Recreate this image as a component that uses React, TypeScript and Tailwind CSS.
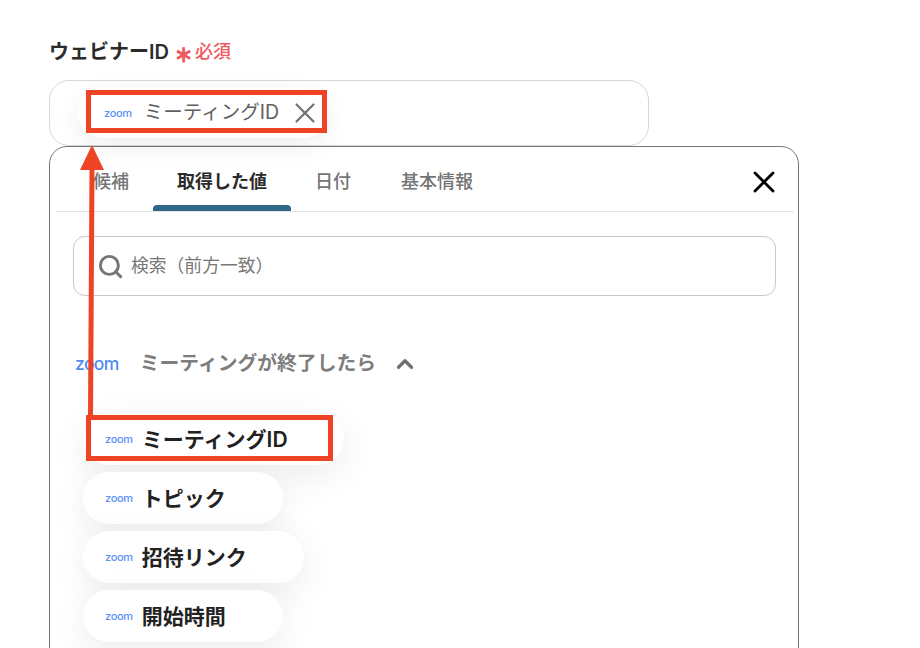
import { ChevronUp, Search, X } from "lucide-react"

const fontStack = "font-['Inter','Noto_Sans_CJK_JP',sans-serif]"

function ZoomLogo({ size }: { size: "sm" | "lg" }) {
  // Zoom wordmark
  return (
    <span
      className={
        size === "sm"
          ? "font-['Inter',sans-serif] text-[11px] leading-none font-medium tracking-[-0.3px] text-[#5b93f5]"
          : "font-['Inter',sans-serif] text-[17.5px] leading-none font-medium tracking-[-0.6px] text-[#4f8cf0]"
      }
    >
      zoom
    </span>
  )
}

function ValueChip({ label, width }: { label: string; width: string }) {
  return (
    <div
      className={`flex h-[52px] items-center rounded-full bg-white pl-[22px] shadow-[0_10px_36px_rgba(0,0,0,0.08)] ${width}`}
    >
      <ZoomLogo size="sm" />
      <span className="ml-[9px] text-[21px] leading-none font-semibold text-[#222222]">
        {label}
      </span>
    </div>
  )
}

function Tab({ label }: { label: string }) {
  return (
    <div className="flex h-[64px] items-center px-[24px] pt-[5px] text-[18px] font-medium text-[#757575]">
      {label}
    </div>
  )
}

export default function App() {
  return (
    <div
      className={`relative h-[648px] w-[920px] overflow-hidden bg-white pt-[40px] pl-[49px] ${fontStack}`}
    >
      {/* Label */}
      <div className="flex h-[24px] items-center">
        <span className="text-[20px] leading-none font-semibold text-[#2b2b2b]">
          ウェビナーID
        </span>
        <span className="mt-[5px] ml-[5px] text-[23px] leading-none font-bold text-[#ee5a60]">
          ∗
        </span>
        <span className="ml-[2px] text-[18px] leading-none font-medium text-[#ee5a60]">
          必須
        </span>
      </div>

      {/* Input with selected value */}
      <div className="mt-[16px] flex h-[66px] w-[600px] items-center rounded-[20px] border border-[#d4d8dc] pl-[28px]">
        <div className="flex h-[50px] w-[250px] items-center rounded-full bg-white pl-[26px] shadow-[0_8px_28px_rgba(0,0,0,0.07)]">
          <ZoomLogo size="sm" />
          <span className="ml-[12px] text-[19.5px] leading-none text-[#5f5f5f]">
            ミーティングID
          </span>
          <X className="ml-[9px] h-[34px] w-[34px] text-[#707070]" strokeWidth={1.5} />
        </div>
      </div>

      {/* Picker panel */}
      <div className="h-[520px] w-[750px] rounded-t-[18px] border border-[#777777] pr-[4px] pl-[6px]">
        <div className="relative flex h-[65px] items-end border-b border-[#e4e4e4] pl-[13px]">
          <Tab label="候補" />
          <div className="relative flex h-[64px] items-center px-[24px] pt-[5px] text-[18px] font-bold text-[#2b2b2b]">
            取得した値
            <div className="absolute right-0 bottom-0 left-0 h-[6px] rounded-t-[4px] bg-[#2e6a85]" />
          </div>
          <Tab label="日付" />
          <div className="ml-[2px]">
            <Tab label="基本情報" />
          </div>
          <X
            className="absolute top-[17px] right-[12px] h-[36px] w-[36px] text-black"
            strokeWidth={1.9}
          />
        </div>

        {/* Search */}
        <div className="mt-[24px] ml-[17px] flex h-[60px] w-[703px] items-center rounded-[12px] border border-[#c8c8c8] pl-[23px]">
          <Search className="h-[27px] w-[27px] text-[#757575]" strokeWidth={2.6} />
          <span className="ml-[7px] text-[17.8px] leading-none text-[#777777]">
            検索（前方一致）
          </span>
        </div>

        {/* Group header */}
        <div className="mt-[50px] ml-[19px] flex h-[36px] items-center">
          <ZoomLogo size="lg" />
          <span className="ml-[21px] text-[19.8px] leading-none font-bold text-[#7d7d7d]">
            ミーティングが終了したら
          </span>
          <ChevronUp className="ml-[16px] h-[26px] w-[26px] text-[#707070]" strokeWidth={3} />
        </div>

        {/* Values */}
        <div className="mt-[31px] ml-[27px] flex flex-col gap-[7px]">
          <ValueChip label="ミーティングID" width="w-[261px]" />
          <ValueChip label="トピック" width="w-[200px]" />
          <ValueChip label="招待リンク" width="w-[221px]" />
          <ValueChip label="開始時間" width="w-[200px]" />
        </div>
      </div>

      {/* Red annotations */}
      <div className="absolute top-[90px] left-[86px] h-[43px] w-[241px] border-[5px] border-[#ee4325]" />
      <div className="absolute top-[415px] left-[86px] h-[46px] w-[247px] border-[5px] border-[#ee4325]" />
      <svg className="absolute top-[145px] left-[78px]" width="28" height="272" viewBox="0 0 28 272">
        <path d="M14 0 L26 25 L2 25 Z" fill="#ee4325" />
        <path d="M11.5 24 L16.5 24 L15 271 L10 271 Z" fill="#ee4325" />
      </svg>
    </div>
  )
}
